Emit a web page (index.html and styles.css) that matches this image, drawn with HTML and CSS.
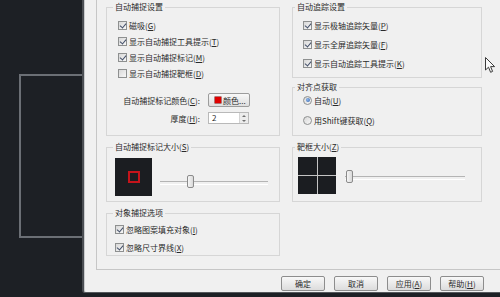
FILE: index.html
```html
<!DOCTYPE html>
<html lang="zh-CN">
<head>
    <meta charset="UTF-8">
    <title>选项 - 绘图</title>
    <link rel="stylesheet" href="styles.css">
</head>
<body>
    <div class="shape"></div>

    <div class="dialog">
        <div class="page">
            <div class="grid">
                <fieldset class="box snap">
                    <legend>自动捕捉设置</legend>
                    <div class="list">
                        <label class="row"><span class="cb on"></span><span>磁吸(<u>G</u>)</span></label>
                        <label class="row"><span class="cb on"></span><span>显示自动捕捉工具提示(<u>T</u>)</span></label>
                        <label class="row"><span class="cb on"></span><span>显示自动捕捉标记(<u>M</u>)</span></label>
                        <label class="row"><span class="cb"></span><span>显示自动捕捉靶框(<u>D</u>)</span></label>
                        <div class="props">
                            <span class="plabel">自动捕捉标记颜色(<u>C</u>):</span>
                            <button class="color-btn"><span class="swatch"></span>颜色...</button>
                            <span class="plabel">厚度(<u>H</u>):</span>
                            <span class="spin">
                                <span>2</span>
                                <span class="arrows"><i class="up"></i><i class="down"></i></span>
                            </span>
                        </div>
                    </div>
                </fieldset>

                <div class="stack">
                    <fieldset class="box track">
                        <legend>自动追踪设置</legend>
                        <div class="list">
                            <label class="row"><span class="cb on"></span><span>显示极轴追踪矢量(<u>P</u>)</span></label>
                            <label class="row"><span class="cb on"></span><span>显示全屏追踪矢量(<u>F</u>)</span></label>
                            <label class="row"><span class="cb on"></span><span>显示自动追踪工具提示(<u>K</u>)</span></label>
                        </div>
                    </fieldset>
                    <fieldset class="box align">
                        <legend>对齐点获取</legend>
                        <div class="list">
                            <label class="row"><span class="rb on"></span><span>自动(<u>U</u>)</span></label>
                            <label class="row"><span class="rb"></span><span>用Shift键获取(<u>Q</u>)</span></label>
                        </div>
                    </fieldset>
                </div>

                <fieldset class="box size">
                    <legend>自动捕捉标记大小(<u>S</u>)</legend>
                    <div class="body">
                        <div class="preview"><span class="marker"></span></div>
                        <div class="slider"><span class="thumb"></span></div>
                    </div>
                </fieldset>

                <fieldset class="box aperture">
                    <legend>靶框大小(<u>Z</u>)</legend>
                    <div class="body">
                        <div class="preview cross"></div>
                        <div class="slider"><span class="thumb"></span></div>
                    </div>
                </fieldset>

                <fieldset class="box options">
                    <legend>对象捕捉选项</legend>
                    <div class="list">
                        <label class="row"><span class="cb on"></span><span>忽略图案填充对象(<u>I</u>)</span></label>
                        <label class="row"><span class="cb on"></span><span>忽略尺寸界线(<u>X</u>)</span></label>
                    </div>
                </fieldset>
            </div>
        </div>

        <div class="buttons">
            <button class="btn">确定</button>
            <button class="btn">取消</button>
            <button class="btn">应用(<u>A</u>)</button>
            <button class="btn">帮助(<u>H</u>)</button>
        </div>
    </div>

    <svg class="cursor" width="11" height="17" viewBox="0 0 11 17">
        <path d="M0.5 0.5 L0.5 13 L3.5 10.2 L5.6 15.3 L7.6 14.4 L5.6 9.6 L9.6 9.6 Z" fill="#fafafa" stroke="#3a3a3a" stroke-width="1"/>
    </svg>
</body>
</html>
```

FILE: styles.css
```css
* {
    box-sizing: border-box;
}

body {
    margin: 0;
    width: 500px;
    height: 297px;
    overflow: hidden;
    position: relative;
    background: #1d2025;
    font-family: "Noto Sans CJK SC", "Noto Sans", sans-serif;
    font-size: 8px;
    color: #2a2a2a;
}

u {
    text-decoration-thickness: 1px;
}

/* rectangle drawn in model space, behind the dialog */
.shape {
    position: absolute;
    left: 19px;
    top: 74px;
    width: 80px;
    height: 164px;
    border: 2px solid #6b6f75;
}

.dialog {
    position: absolute;
    left: 82px;
    top: -10px;
    width: 440px;
    height: 303px;
    background: #f0f0f0;
    border-left: 2px solid #4b4e53;
    border-bottom: 1px solid #55585c;
    border-bottom-left-radius: 3px;
    box-shadow: inset 1px 0 0 #c9cbcd;
}

.page {
    margin-left: 12px;
    height: 280px;
    border: 1px solid #c6c6c6;
    border-right: none;
    padding: 11px 0 0 9px;
}

.grid {
    display: grid;
    grid-template-columns: 174px 190px;
    column-gap: 12px;
    row-gap: 6px;
}

.stack {
    display: flex;
    flex-direction: column;
    gap: 4px;
}

.box {
    margin: 0;
    padding: 0;
    min-width: 0;
    border: 1px solid #d6d6d6;
}

.box legend {
    padding: 0 2px;
    margin-left: 6px;
    line-height: 10px;
}

.track legend,
.align legend,
.aperture legend {
    margin-left: 2px;
}

.row {
    display: flex;
    align-items: center;
    gap: 2px;
    height: 16px;
    white-space: nowrap;
}

/* checkbox and radio */
.cb,
.rb {
    position: relative;
    flex: none;
    width: 9px;
    height: 9px;
    border: 1px solid #8e9090;
    background: linear-gradient(135deg, #d8d8d8, #f7f7f7);
}

.cb.on::after {
    content: '';
    position: absolute;
    left: 2px;
    top: 0;
    width: 3px;
    height: 5px;
    border: solid #44506a;
    border-width: 0 1.5px 1.5px 0;
    transform: rotate(40deg);
}

.rb {
    border-radius: 50%;
}

.rb.on::after {
    content: '';
    position: absolute;
    left: 1.5px;
    top: 1.5px;
    width: 4px;
    height: 4px;
    border-radius: 50%;
    background: radial-gradient(circle at 40% 40%, #8fb7ea, #2f62b0);
}

.snap .list {
    padding: 5px 0 0 11px;
}

.track .list {
    padding: 4px 0 4px 10px;
}

.track .row {
    height: 19px;
}

.align .list {
    display: flex;
    flex-direction: column;
    gap: 4px;
    padding: 0 0 7px 10px;
}

.options .list {
    display: flex;
    flex-direction: column;
    gap: 2px;
    padding: 3px 0 0 8px;
}

/* colour + thickness */
.props {
    display: grid;
    grid-template-columns: 84px auto;
    column-gap: 8px;
    row-gap: 5px;
    align-items: center;
    margin: 12px 0 0 -2px;
}

.plabel {
    text-align: right;
    white-space: nowrap;
}

.color-btn {
    display: flex;
    align-items: center;
    gap: 2px;
    width: 42px;
    height: 14px;
    padding: 0 0 0 6px;
    font: inherit;
    color: inherit;
    border: 1px solid #9c9c9c;
    border-radius: 2px;
    background: linear-gradient(#f8f8f8, #dedede);
}

.swatch {
    width: 6px;
    height: 6px;
    background: #e00000;
    box-shadow: 0 0 0 0.5px #7a0000;
}

.spin {
    display: flex;
    justify-content: space-between;
    width: 41px;
    height: 12px;
    padding-left: 3px;
    line-height: 10px;
    border: 1px solid #b9b9b9;
    background: #fff;
}

.arrows {
    display: flex;
    flex-direction: column;
    align-items: center;
    justify-content: space-around;
    width: 9px;
    background: #ececec;
    border-left: 1px solid #d4d4d4;
}

.arrows i {
    width: 0;
    height: 0;
    border-left: 2px solid transparent;
    border-right: 2px solid transparent;
}

.arrows .up {
    border-bottom: 2px solid #707070;
}

.arrows .down {
    border-top: 2px solid #707070;
}

/* marker size / aperture size */
.size .body {
    display: flex;
    padding: 6px 0 5px 8px;
}

.aperture .body {
    display: flex;
    padding: 5px 0 5px 5px;
}

.preview {
    display: flex;
    align-items: center;
    justify-content: center;
    width: 37px;
    height: 38px;
    background: #1b1d21;
}

.marker {
    width: 12px;
    height: 12px;
    border: 2px solid #c4141b;
}

.preview.cross {
    width: 38px;
    height: 37px;
    background:
        linear-gradient(#c4c4c4, #c4c4c4) center / 1px 100% no-repeat,
        linear-gradient(#c4c4c4, #c4c4c4) center / 100% 1px no-repeat,
        #1b1d21;
}

.slider {
    position: relative;
    height: 13px;
}

.slider::before {
    content: '';
    position: absolute;
    left: 0;
    right: 0;
    top: 6px;
    height: 2px;
    border-top: 1px solid #b4b4b4;
    border-bottom: 1px solid #ffffff;
}

.size .slider {
    width: 108px;
    margin: 17px 0 0 8px;
}

.aperture .slider {
    width: 120px;
    margin: 13px 0 0 9px;
}

.thumb {
    position: absolute;
    top: 0;
    width: 7px;
    height: 13px;
    border: 1px solid #8b8b8b;
    border-radius: 2px;
    background: linear-gradient(90deg, #f6f6f6, #d9d9d9);
}

.size .thumb {
    left: 27px;
}

.aperture .thumb {
    left: 1px;
}

/* dialog buttons */
.buttons {
    display: flex;
    justify-content: flex-end;
    gap: 9px;
    padding-right: 38px;
    margin-top: 6px;
}

.btn {
    width: 44px;
    height: 15px;
    padding: 0;
    font: inherit;
    color: inherit;
    border: 1px solid #8d8d8d;
    border-radius: 2px;
    background: linear-gradient(#f8f8f8, #dcdcdc);
}

.cursor {
    position: absolute;
    left: 485px;
    top: 57px;
}
```
